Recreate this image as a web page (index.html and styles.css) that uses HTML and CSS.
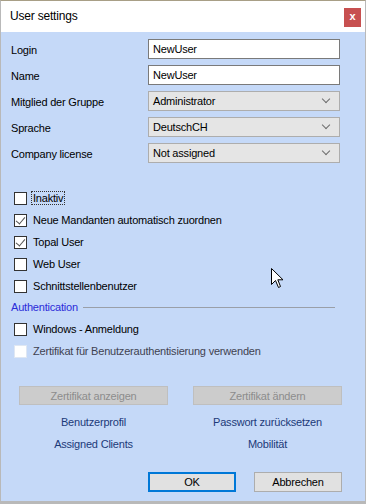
FILE: index.html
```html
<html>
<head>
    <title>User settings</title>
    <meta name="viewport" content="width=device-width, initial-scale=1.0">
    <link rel="stylesheet" href="styles.css">
</head>
<body>
    <div class="window">
        <div class="titlebar">
            <span class="title">User settings</span>
            <button class="close-btn">x</button>
        </div>

        <div class="content">
            <div class="form-grid">
                <label>Login</label>
                <div class="textbox">NewUser</div>
                <label>Name</label>
                <div class="textbox">NewUser</div>
                <label>Mitglied der Gruppe</label>
                <div class="combo">Administrator <span class="chevron"></span></div>
                <label>Sprache</label>
                <div class="combo">DeutschCH <span class="chevron"></span></div>
                <label>Company license</label>
                <div class="combo">Not assigned <span class="chevron"></span></div>
            </div>

            <div class="checks">
                <div class="check"><span class="box"></span><span class="focus">Inaktiv</span></div>
                <div class="check"><span class="box checked"></span>Neue Mandanten automatisch zuordnen</div>
                <div class="check"><span class="box checked"></span>Topal User</div>
                <div class="check"><span class="box"></span>Web User</div>
                <div class="check"><span class="box"></span>Schnittstellenbenutzer</div>
            </div>

            <div class="group-head">
                <span>Authentication</span>
                <span class="rule"></span>
            </div>

            <div class="checks">
                <div class="check"><span class="box"></span>Windows - Anmeldung</div>
                <div class="check disabled"><span class="box"></span>Zertifikat für Benutzerauthentisierung verwenden</div>
            </div>

            <div class="cert-buttons">
                <button class="btn" disabled>Zertifikat anzeigen</button>
                <button class="btn" disabled>Zertifikat ändern</button>
            </div>

            <div class="links">
                <a>Benutzerprofil</a>
                <a>Passwort zurücksetzen</a>
                <a>Assigned Clients</a>
                <a>Mobilität</a>
            </div>

            <div class="footer">
                <button class="btn primary">OK</button>
                <button class="btn">Abbrechen</button>
            </div>
        </div>

        <!-- mouse pointer -->
        <svg class="cursor" width="13" height="21" viewBox="0 0 13 21">
            <path d="M0.5 0.5 L0.5 16.5 L4.5 12.5 L7.5 19.5 L9.5 18.5 L6.8 11.8 L12 11.8 Z" fill="#fff" stroke="#000" stroke-width="1"/>
        </svg>
    </div>
</body>
</html>
```

FILE: styles.css
```css
body {
    margin: 0;
    padding: 0;
    font-family: "Liberation Sans", Arial, sans-serif;
    font-size: 11px;
    letter-spacing: -0.2px;
    color: #000;
    background: #fff;
}
.window {
    position: relative;
    width: 366px;
    height: 504px;
    box-sizing: border-box;
    border-top: 1px solid #a89f86;
    border-left: 1px solid #b9b9b9;
    border-right: 1px solid #b9b9b9;
    border-bottom: 3px solid #b9b9b9;
    background: #c5d9f8;
}
.titlebar {
    height: 31px;
    background: #fff;
    display: flex;
    align-items: center;
    justify-content: space-between;
    padding: 0 4px 0 9px;
}
.title {
    font-size: 12px;
    color: #000;
    margin-top: -2px;
}
.close-btn {
    width: 17px;
    height: 19px;
    margin-top: 1px;
    border: none;
    background: #c75050;
    color: #fff;
    font-family: "Liberation Sans", Arial, sans-serif;
    font-weight: bold;
    font-size: 11px;
    padding: 0 0 3px;
}
.content {
    padding: 7px 23px 0 10px;
}
.form-grid {
    display: grid;
    grid-template-columns: 137px 192px;
    grid-auto-rows: 20px;
    row-gap: 6px;
    align-items: center;
}
.form-grid label {
    padding-top: 2px;
}
.textbox,
.combo {
    height: 20px;
    box-sizing: border-box;
    padding: 0 4px;
    display: flex;
    align-items: center;
}
.textbox {
    background: #fff;
    border: 1px solid #7a7a7a;
}
.combo {
    background: #e5e5e5;
    border: 1px solid #adadad;
    justify-content: space-between;
}
.chevron {
    width: 5px;
    height: 5px;
    border-right: 1px solid #6d6d6d;
    border-bottom: 1px solid #6d6d6d;
    transform: rotate(45deg);
    margin: 0 6px 4px 0;
}
.checks {
    display: flex;
    flex-direction: column;
    padding-left: 3px;
}
.form-grid + .checks {
    margin-top: 24px;
}
.check {
    height: 22px;
    display: flex;
    align-items: center;
    gap: 6px;
}
.box {
    width: 13px;
    height: 13px;
    box-sizing: border-box;
    border: 1px solid #333;
    background: #fff;
    position: relative;
}
.box.checked::after {
    content: "";
    position: absolute;
    left: 3px;
    top: 0px;
    width: 4px;
    height: 8px;
    border-right: 1px solid #555;
    border-bottom: 1px solid #555;
    transform: rotate(40deg);
}
.focus {
    outline: 1px dotted #333;
    outline-offset: 0;
    padding: 0 1px;
    margin-left: -1px;
}
.check.disabled {
    color: #3f4250;
}
.check.disabled .box {
    border-color: #dfe7f3;
}
.group-head {
    height: 14px;
    margin-top: 3px;
    display: flex;
    align-items: center;
    gap: 5px;
    color: #2b2bd9;
    font-size: 11px;
    margin-bottom: 4px;
}
.rule {
    flex: 1;
    border-top: 1px solid #9a9fa8;
    margin-right: 7px;
}
.cert-buttons {
    display: flex;
    justify-content: space-between;
    margin: 24px 0 0 8px;
}
.btn {
    width: 149px;
    height: 19px;
    box-sizing: border-box;
    background: #e1e1e1;
    border: 1px solid #adadad;
    font-family: "Liberation Sans", Arial, sans-serif;
    font-size: 11px;
    letter-spacing: -0.2px;
    color: #000;
    padding: 0;
}
.btn:disabled {
    background: #cccccc;
    border-color: #bfbfbf;
    color: #8d8d8d;
}
.links {
    display: grid;
    grid-template-columns: 149px 149px;
    justify-content: space-between;
    grid-auto-rows: 22px;
    align-items: center;
    justify-items: center;
    margin: 6px 0 0 8px;
    color: #1c3a78;
}
.footer {
    display: flex;
    justify-content: flex-end;
    gap: 18px;
    margin-top: 17px;
}
.footer .btn {
    width: 88px;
    height: 20px;
}
.btn.primary {
    border: 2px solid #0078d7;
}
.cursor {
    position: absolute;
    left: 270px;
    top: 267px;
}
```
